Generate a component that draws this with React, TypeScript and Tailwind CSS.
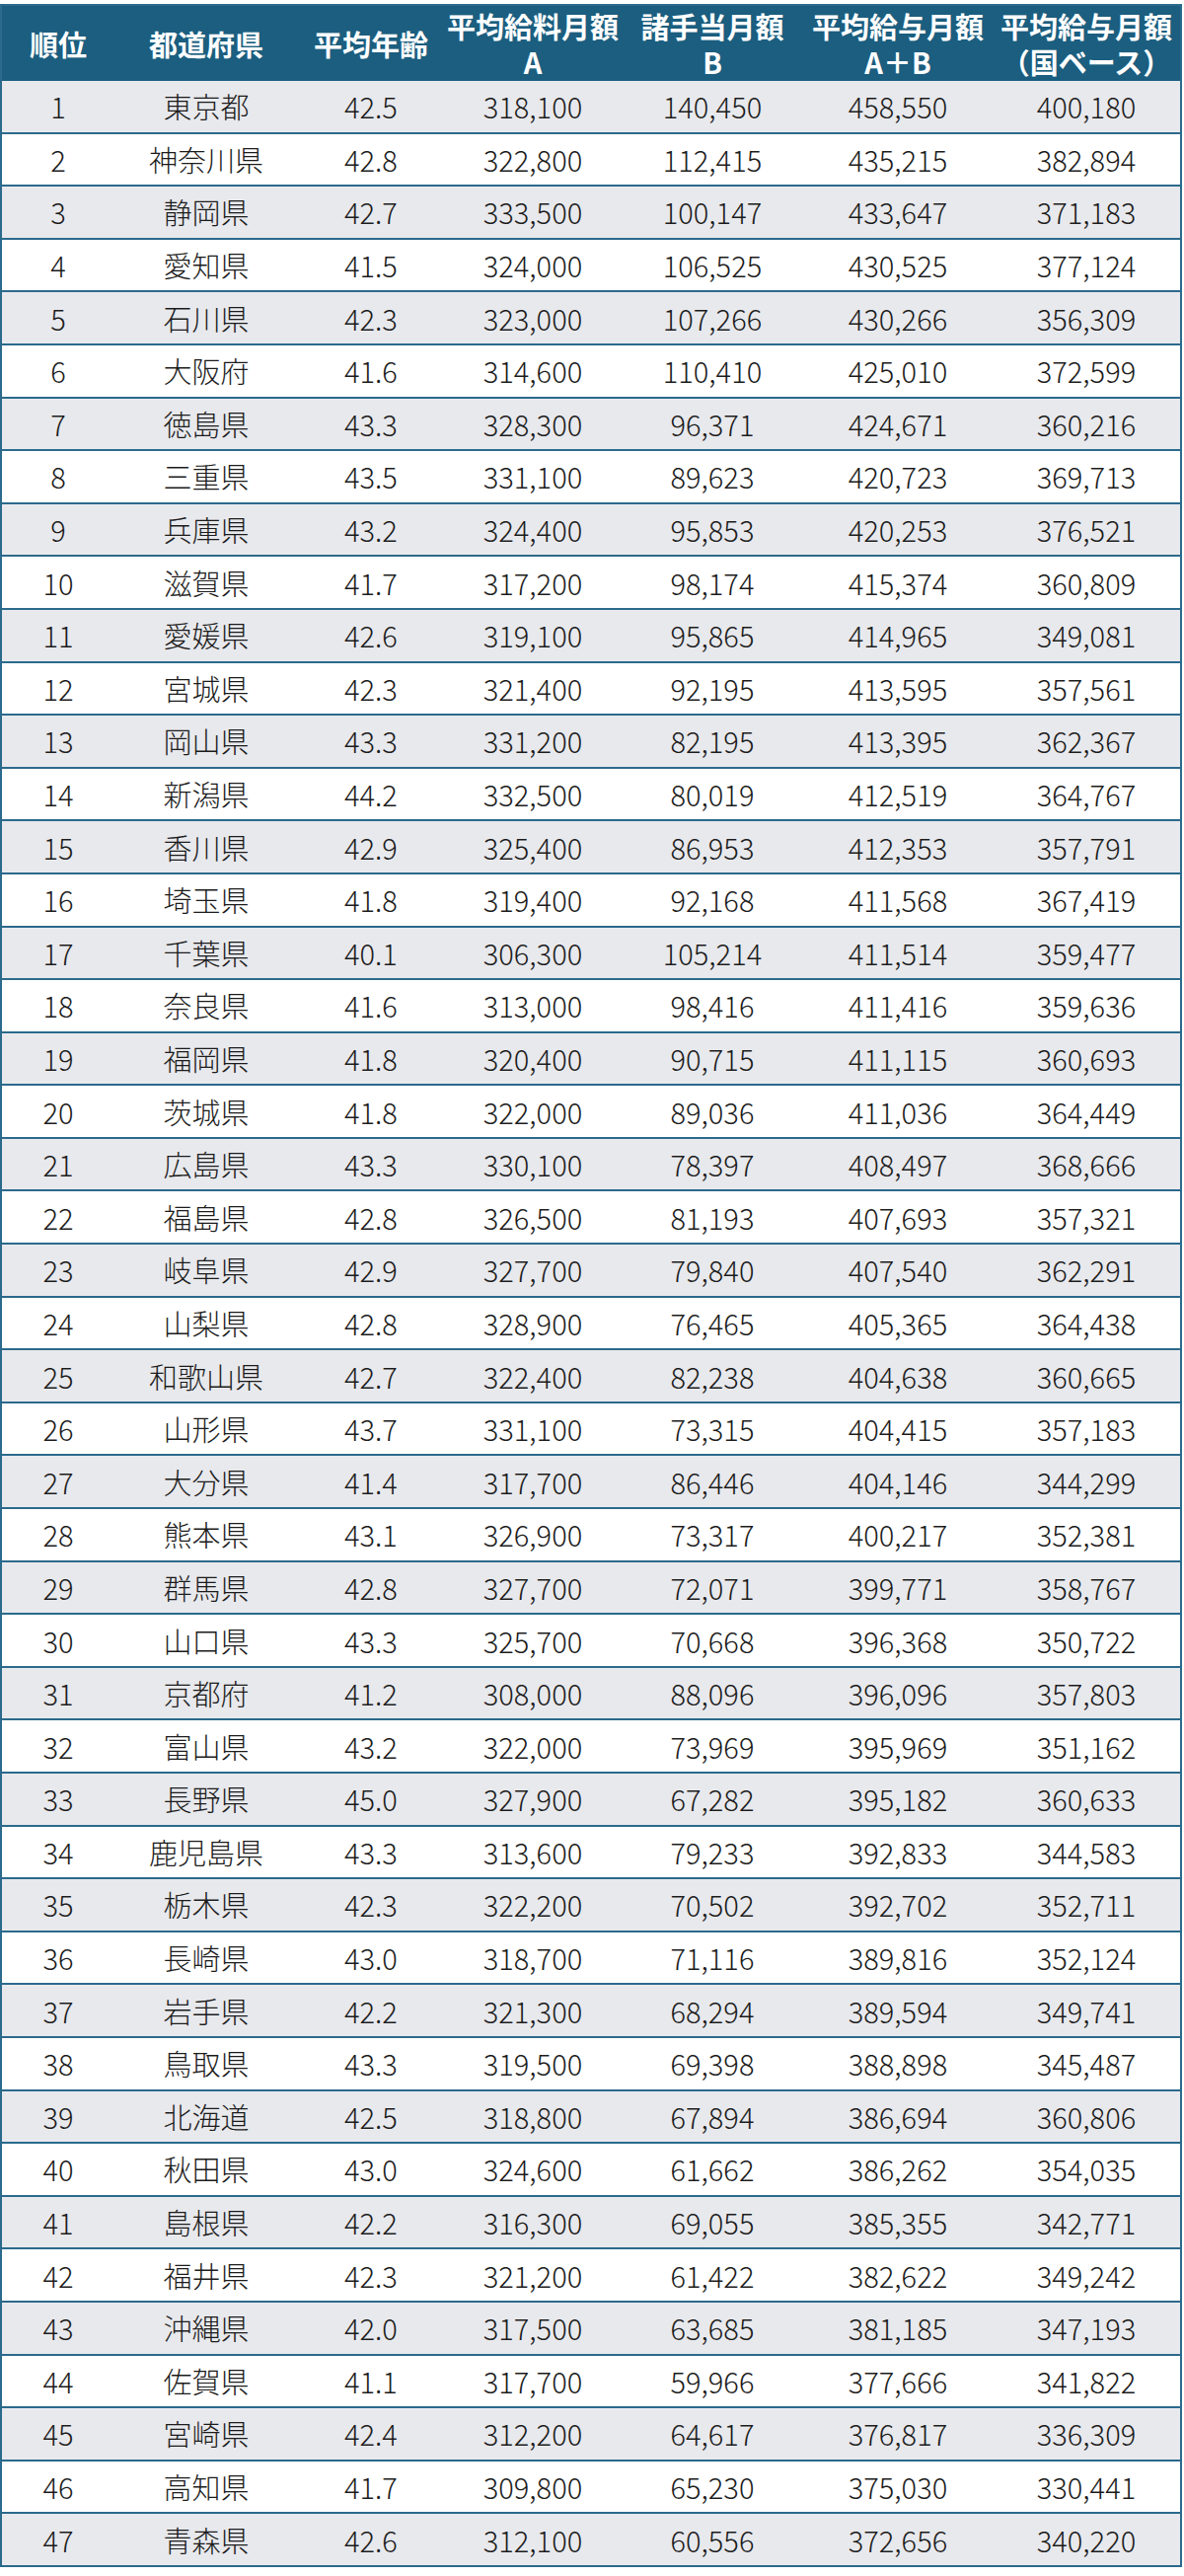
const ROWS: [number, string, string, string, string, string, string][] = [
  [1, '東京都', '42.5', '318,100', '140,450', '458,550', '400,180'],
  [2, '神奈川県', '42.8', '322,800', '112,415', '435,215', '382,894'],
  [3, '静岡県', '42.7', '333,500', '100,147', '433,647', '371,183'],
  [4, '愛知県', '41.5', '324,000', '106,525', '430,525', '377,124'],
  [5, '石川県', '42.3', '323,000', '107,266', '430,266', '356,309'],
  [6, '大阪府', '41.6', '314,600', '110,410', '425,010', '372,599'],
  [7, '徳島県', '43.3', '328,300', '96,371', '424,671', '360,216'],
  [8, '三重県', '43.5', '331,100', '89,623', '420,723', '369,713'],
  [9, '兵庫県', '43.2', '324,400', '95,853', '420,253', '376,521'],
  [10, '滋賀県', '41.7', '317,200', '98,174', '415,374', '360,809'],
  [11, '愛媛県', '42.6', '319,100', '95,865', '414,965', '349,081'],
  [12, '宮城県', '42.3', '321,400', '92,195', '413,595', '357,561'],
  [13, '岡山県', '43.3', '331,200', '82,195', '413,395', '362,367'],
  [14, '新潟県', '44.2', '332,500', '80,019', '412,519', '364,767'],
  [15, '香川県', '42.9', '325,400', '86,953', '412,353', '357,791'],
  [16, '埼玉県', '41.8', '319,400', '92,168', '411,568', '367,419'],
  [17, '千葉県', '40.1', '306,300', '105,214', '411,514', '359,477'],
  [18, '奈良県', '41.6', '313,000', '98,416', '411,416', '359,636'],
  [19, '福岡県', '41.8', '320,400', '90,715', '411,115', '360,693'],
  [20, '茨城県', '41.8', '322,000', '89,036', '411,036', '364,449'],
  [21, '広島県', '43.3', '330,100', '78,397', '408,497', '368,666'],
  [22, '福島県', '42.8', '326,500', '81,193', '407,693', '357,321'],
  [23, '岐阜県', '42.9', '327,700', '79,840', '407,540', '362,291'],
  [24, '山梨県', '42.8', '328,900', '76,465', '405,365', '364,438'],
  [25, '和歌山県', '42.7', '322,400', '82,238', '404,638', '360,665'],
  [26, '山形県', '43.7', '331,100', '73,315', '404,415', '357,183'],
  [27, '大分県', '41.4', '317,700', '86,446', '404,146', '344,299'],
  [28, '熊本県', '43.1', '326,900', '73,317', '400,217', '352,381'],
  [29, '群馬県', '42.8', '327,700', '72,071', '399,771', '358,767'],
  [30, '山口県', '43.3', '325,700', '70,668', '396,368', '350,722'],
  [31, '京都府', '41.2', '308,000', '88,096', '396,096', '357,803'],
  [32, '富山県', '43.2', '322,000', '73,969', '395,969', '351,162'],
  [33, '長野県', '45.0', '327,900', '67,282', '395,182', '360,633'],
  [34, '鹿児島県', '43.3', '313,600', '79,233', '392,833', '344,583'],
  [35, '栃木県', '42.3', '322,200', '70,502', '392,702', '352,711'],
  [36, '長崎県', '43.0', '318,700', '71,116', '389,816', '352,124'],
  [37, '岩手県', '42.2', '321,300', '68,294', '389,594', '349,741'],
  [38, '鳥取県', '43.3', '319,500', '69,398', '388,898', '345,487'],
  [39, '北海道', '42.5', '318,800', '67,894', '386,694', '360,806'],
  [40, '秋田県', '43.0', '324,600', '61,662', '386,262', '354,035'],
  [41, '島根県', '42.2', '316,300', '69,055', '385,355', '342,771'],
  [42, '福井県', '42.3', '321,200', '61,422', '382,622', '349,242'],
  [43, '沖縄県', '42.0', '317,500', '63,685', '381,185', '347,193'],
  [44, '佐賀県', '41.1', '317,700', '59,966', '377,666', '341,822'],
  [45, '宮崎県', '42.4', '312,200', '64,617', '376,817', '336,309'],
  [46, '高知県', '41.7', '309,800', '65,230', '375,030', '330,441'],
  [47, '青森県', '42.6', '312,100', '60,556', '372,656', '340,220'],
]

const HEADERS: string[][] = [
  ['順位'],
  ['都道府県'],
  ['平均年齢'],
  ['平均給料月額', 'A'],
  ['諸手当月額', 'B'],
  ['平均給与月額', 'A＋B'],
  ['平均給与月額', '（国ベース）'],
]

// fixed column widths so the centers line up with the source table
const COLS = 'grid grid-cols-[114px_186px_148px_180px_184px_192px_190px]'

export default function App() {
  return (
    <div
      className="bg-white pt-[4px] w-[1200px] min-h-[2610px]"
      style={{ fontFamily: '"Noto Sans CJK JP", "Noto Sans", sans-serif' }}
    >
      <div className="w-[1198px] border-x-2 border-t-2 border-[#2b6a8c]">
        {/* Header */}
        <div className={`${COLS} h-[76px] bg-[#1b5e7f] text-white font-bold text-[29px]`}>
          {HEADERS.map((h, i) => (
            <div key={i} className="flex flex-col items-center justify-center leading-[36px] whitespace-nowrap">
              {h.map(line => (
                <span key={line}>{line}</span>
              ))}
            </div>
          ))}
        </div>

        {/* Body */}
        {ROWS.map((r, ri) => (
          <div
            key={r[0]}
            className={`${COLS} h-[53.6px] border-b-2 border-[#2b6a8c] text-[29px] font-light text-[#1c1c1c] ${ri % 2 === 0 ? 'bg-[#e8e9ed]' : 'bg-white'}`}
          >
            {r.map((c, ci) => (
              <div key={ci} className="flex items-center justify-center leading-none whitespace-nowrap">
                {c}
              </div>
            ))}
          </div>
        ))}
      </div>
    </div>
  )
}
